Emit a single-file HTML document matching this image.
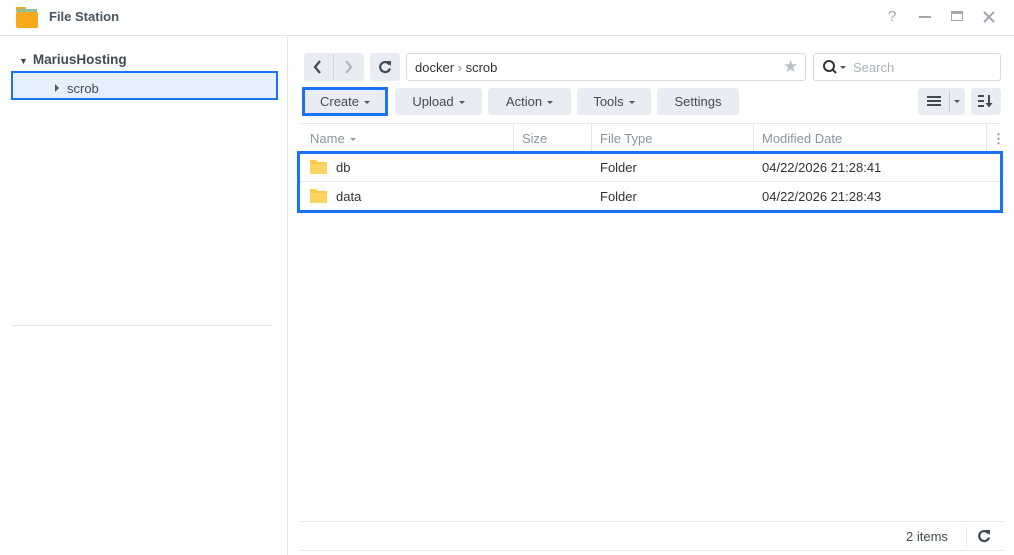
<!DOCTYPE html>
<html><head><style>
*{box-sizing:border-box;margin:0;padding:0}
body{width:1014px;height:555px;background:#fff;font-family:"Liberation Sans",sans-serif;font-size:13px;color:#333;position:relative;overflow:hidden}
.a{position:absolute}
.btn{position:absolute;background:#e9edf3;border-radius:3px;height:27px;top:88px;line-height:27px;text-align:center;color:#414b55;font-size:13px}
.car{display:inline-block;width:0;height:0;border-left:3px solid transparent;border-right:3px solid transparent;border-top:3px solid #555;vertical-align:middle;margin-left:5px}
.hdr{color:#8a949e;font-size:13px;top:131px}
.vl{position:absolute;width:1px;background:#e3e7eb}
</style></head><body>
<div class="a" style="left:0;top:0;width:1014px;height:36px;border-bottom:1px solid #e1e5ea"></div>
<svg class="a" style="left:15px;top:5px" width="24" height="24"><rect x="1" y="2" width="10" height="5" rx="1" fill="#f2a81d"/><rect x="2" y="4" width="20" height="14" fill="#8fc09a"/><rect x="1" y="7" width="22" height="16" rx="2" fill="#f8a91b"/></svg>
<div class="a" style="left:49px;top:9px;font-weight:bold;color:#4a5560">File Station</div>
<div class="a" style="left:888px;top:8px;color:#a0a7ae;font-size:15px">?</div>
<div class="a" style="left:919px;top:16px;width:12px;height:2px;background:#a0a7ae"></div>
<div class="a" style="left:951px;top:11px;width:12px;height:10px;border:1.5px solid #a0a7ae;border-top-width:3px"></div>
<svg class="a" style="left:983px;top:11px" width="12" height="12"><path d="M1 1L11 11M11 1L1 11" stroke="#a0a7ae" stroke-width="2"/></svg>
<div class="vl" style="left:287px;top:37px;height:518px"></div>
<div class="a" style="left:19px;top:52px;font-weight:bold;color:#414b55;font-size:13.5px"><span style="font-size:9px;margin-right:5px">▼</span>MariusHosting</div>
<div class="a" style="left:11px;top:71px;width:267px;height:29px;border:2px solid #1a73f0;background:#e6f0fc"></div>
<div class="a" style="left:55px;top:84px;width:0;height:0;border-top:4px solid transparent;border-bottom:4px solid transparent;border-left:4px solid #555"></div>
<div class="a" style="left:67px;top:81px;color:#414b55">scrob</div>
<div class="a" style="left:11px;top:325px;width:261px;height:1px;background:#e3e7eb"></div>
<div class="a" style="left:304px;top:53px;width:60px;height:28px;background:#e9edf3;border-radius:3px"></div>
<div class="vl" style="left:333px;top:54px;height:26px;background:#d3d8de"></div>
<svg class="a" style="left:313px;top:60px" width="10" height="14"><path d="M7 1L2 7L7 13" stroke="#414b55" stroke-width="2.2" fill="none"/></svg>
<svg class="a" style="left:343px;top:60px" width="10" height="14"><path d="M3 1L8 7L3 13" stroke="#b0b7be" stroke-width="2.2" fill="none"/></svg>
<div class="a" style="left:370px;top:53px;width:30px;height:28px;background:#e9edf3;border-radius:3px"></div>
<svg class="a" style="left:378px;top:60px" width="14" height="14"><path d="M11.5 4.5A5 5 0 1 0 12 8.5" stroke="#414b55" stroke-width="2.2" fill="none"/><path d="M8 1h5v5z" fill="#414b55"/></svg>
<div class="a" style="left:406px;top:53px;width:400px;height:28px;border:1px solid #d6dbe0;border-radius:3px"></div>
<div class="a" style="left:415px;top:60px;color:#333">docker <span style="color:#888">›</span> scrob</div>
<div class="a" style="left:783px;top:57px;color:#b9c0c7;font-size:17px">★</div>
<div class="a" style="left:813px;top:53px;width:188px;height:28px;border:1px solid #d6dbe0;border-radius:3px"></div>
<svg class="a" style="left:822px;top:59px" width="16" height="16"><circle cx="7" cy="7" r="5" fill="none" stroke="#333" stroke-width="2"/><line x1="10.5" y1="10.5" x2="14" y2="14" stroke="#333" stroke-width="2"/></svg>
<div class="a" style="left:840px;top:66px;border-left:3px solid transparent;border-right:3px solid transparent;border-top:3px solid #555"></div>
<div class="a" style="left:853px;top:60px;color:#aab2ba">Search</div>
<div class="btn" style="left:302px;width:86px;border:3px solid #1a73f0;border-radius:0;top:87px;height:29px;line-height:23px">Create<span class="car"></span></div>
<div class="btn" style="left:395px;width:87px">Upload<span class="car"></span></div>
<div class="btn" style="left:488px;width:83px">Action<span class="car"></span></div>
<div class="btn" style="left:577px;width:74px">Tools<span class="car"></span></div>
<div class="btn" style="left:657px;width:82px">Settings</div>
<div class="btn" style="left:918px;width:47px"></div>
<div class="vl" style="left:949px;top:91px;height:21px;background:#c9ced4"></div>
<div class="a" style="left:927px;top:96px;width:14px;height:2px;background:#414b55;box-shadow:0 4px 0 #414b55,0 8px 0 #414b55"></div>
<div class="a" style="left:954px;top:100px;border-left:3px solid transparent;border-right:3px solid transparent;border-top:3px solid #555"></div>
<div class="btn" style="left:971px;width:30px"></div>
<svg class="a" style="left:978px;top:95px" width="16" height="13"><path d="M0 1h6M0 6h6M0 11h6" stroke="#414b55" stroke-width="2"/><path d="M11 0v9" stroke="#414b55" stroke-width="2"/><path d="M7.5 8h7L11 12.5z" fill="#414b55"/></svg>
<div class="a" style="left:301px;top:123px;width:700px;height:1px;background:#e3e7eb"></div>
<div class="vl" style="left:513px;top:124px;height:27px"></div>
<div class="vl" style="left:591px;top:124px;height:27px"></div>
<div class="vl" style="left:753px;top:124px;height:27px"></div>
<div class="vl" style="left:986px;top:124px;height:27px"></div>
<div class="a hdr" style="left:310px">Name<span class="car" style="border-top-color:#999"></span></div>
<div class="a hdr" style="left:522px">Size</div>
<div class="a hdr" style="left:600px">File Type</div>
<div class="a hdr" style="left:762px">Modified Date</div>
<div class="a hdr" style="left:992px;font-weight:bold">⋮</div>
<div class="a" style="left:297px;top:151px;width:706px;height:62px;border:3px solid #1a73f0"></div>
<div class="a" style="left:300px;top:181px;width:700px;height:1px;background:#e8ebee"></div>
<svg class="a" style="left:310px;top:159px" width="17" height="15"><path d="M0 1h6l2 2h9v12H0z" fill="#fcc94a"/><rect y="5" width="17" height="10" fill="#fdd560"/></svg>
<svg class="a" style="left:310px;top:188px" width="17" height="15"><path d="M0 1h6l2 2h9v12H0z" fill="#fcc94a"/><rect y="5" width="17" height="10" fill="#fdd560"/></svg>
<div class="a" style="left:336px;top:160px">db</div>
<div class="a" style="left:336px;top:189px">data</div>
<div class="a" style="left:600px;top:160px">Folder</div>
<div class="a" style="left:600px;top:189px">Folder</div>
<div class="a" style="left:762px;top:160px">04/22/2026 21:28:41</div>
<div class="a" style="left:762px;top:189px">04/22/2026 21:28:43</div>
<div class="a" style="left:301px;top:521px;width:702px;height:1px;background:#e3e7eb"></div>
<div class="a" style="left:301px;top:550px;width:702px;height:1px;background:#e3e7eb"></div>
<div class="a" style="left:906px;top:529px;color:#414b55">2 items</div>
<div class="vl" style="left:966px;top:527px;height:20px"></div>
<svg class="a" style="left:977px;top:529px" width="14" height="14"><path d="M11.5 4.5A5 5 0 1 0 12 8.5" stroke="#414b55" stroke-width="2.2" fill="none"/><path d="M8 1h5v5z" fill="#414b55"/></svg>
</body></html>
